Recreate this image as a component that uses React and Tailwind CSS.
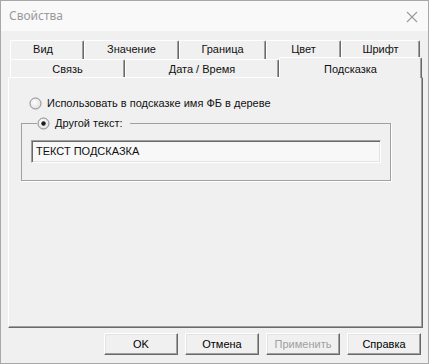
import React from "react";

function Radio({ checked }) {
  return (
    <svg width="13" height="13" viewBox="0 0 13 13" className="shrink-0">
      <defs>
        <radialGradient id={checked ? "rg1" : "rg0"} cx="40%" cy="40%" r="70%">
          <stop offset="0%" stopColor="#ffffff" />
          <stop offset="100%" stopColor="#dcdcdc" />
        </radialGradient>
      </defs>
      <circle cx="6.5" cy="6.5" r="5.5" fill={`url(#${checked ? "rg1" : "rg0"})`} stroke="#8a8a8a" strokeWidth="1" />
      {checked && <circle cx="6.5" cy="6.5" r="2.2" fill="#1c1c1c" />}
    </svg>
  );
}

function Tab({ w, children, row }) {
  return (
    <div
      className={`flex items-center justify-center border-l border-t border-l-white border-t-white border-r border-r-[#696969] shadow-[inset_-1px_0_0_#a0a0a0] rounded-t-[2px] bg-[#f0f0f0] ${row === 1 ? "h-[19px] pb-[1px]" : "h-[18px] pt-[1px]"}`}
      style={{ width: w }}
    >
      {children}
    </div>
  );
}

function Button({ children, disabled }) {
  return (
    <button
      className={`w-[74px] h-[22px] flex items-center justify-center bg-[#f0f0f0] border border-t-white border-l-white border-r-[#696969] border-b-[#696969] shadow-[inset_-1px_-1px_0_#a0a0a0,inset_1px_1px_0_#e3e3e3] ${disabled ? "text-[#a0a0a0]" : "text-black"}`}
    >
      {children}
    </button>
  );
}

export default function App() {
  return (
    <div
      className="w-[429px] h-[364px] border border-[#a8a8a8] bg-[#f0f0f0] flex flex-col text-[11px] text-[#111] overflow-hidden"
      style={{ fontFamily: '"Liberation Sans", Arial, sans-serif' }}
    >
      {/* Title bar */}
      <div className="h-[30px] shrink-0 bg-[#f9f9f9] flex items-center justify-between pl-[8px] pr-[10px]">
        <span
          className="text-[12px] text-[#9a9a9a] pb-[1px]"
          style={{ fontFamily: '"Noto Sans", "Open Sans", sans-serif' }}
        >
          Свойства
        </span>
        <svg width="12" height="12" viewBox="0 0 12 12" className="mt-[1px]">
          <path d="M1 1 L11 11 M11 1 L1 11" stroke="#9a9a9a" strokeWidth="1.1" />
        </svg>
      </div>

      {/* Body */}
      <div className="flex flex-col pt-[9px]">
        {/* Tabs */}
        <div className="flex pl-[9px]">
          <Tab w={74} row={1}><span className="mr-[8px]">Вид</span></Tab>
          <Tab w={95} row={1}>Значение</Tab>
          <Tab w={87} row={1}>Граница</Tab>
          <Tab w={75} row={1}>Цвет</Tab>
          <Tab w={79} row={1}>Шрифт</Tab>
        </div>
        <div className="flex pl-[9px] h-[18px] items-start">
          <Tab w={115} row={2}>Связь</Tab>
          <Tab w={154} row={2}>Дата / Время</Tab>
          <div className="relative z-10 -mt-[2px] w-[143px] h-[21px] flex items-start justify-center pt-[3px] bg-[#f0f0f0] border-l border-t border-l-white border-t-white border-r border-r-[#696969] shadow-[inset_-1px_0_0_#a0a0a0] rounded-t-[2px]">
            Подсказка
          </div>
        </div>

        {/* Panel */}
        <div className="ml-[7px] w-[415px] h-[251px] border border-t-white border-l-white border-r-[#696969] border-b-[#696969] shadow-[inset_-1px_-1px_0_#a0a0a0] flex flex-col pl-[12px] pt-[19px]">
          <div className="flex items-center gap-[5px] pl-[8px] h-[13px]">
            <Radio checked={false} />
            <span>Использовать в подсказке имя ФБ в дереве</span>
          </div>

          <fieldset className="mt-[7px] w-[369px] h-[64px] border border-[#a0a0a0] shadow-[1px_1px_0_#ffffff] px-[9px]">
            <legend className="ml-[6px] pr-[7px] flex items-center gap-[5px] h-[13px]">
              <Radio checked={true} />
              <span>Другой текст:</span>
            </legend>
            <div className="mt-[10px] w-[350px] h-[23px] border border-t-[#a0a0a0] border-l-[#a0a0a0] border-r-white border-b-white shadow-[inset_1px_1px_0_#696969,inset_-1px_-1px_0_#e3e3e3] bg-[#f8f8f8] flex items-center pl-[4px]">
              ТЕКСТ ПОДСКАЗКА
            </div>
          </fieldset>
        </div>

        {/* Buttons */}
        <div className="flex justify-end gap-[7px] pr-[7px] mt-[5px]">
          <Button>OK</Button>
          <Button>Отмена</Button>
          <Button disabled>Применить</Button>
          <Button>Справка</Button>
        </div>
      </div>
    </div>
  );
}
